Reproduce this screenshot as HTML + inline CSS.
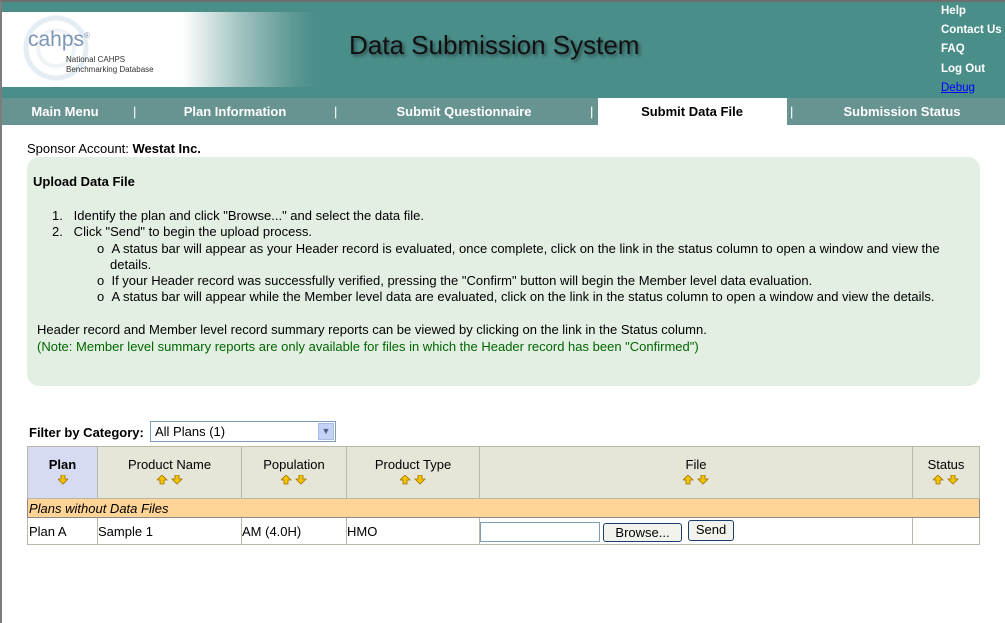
<!DOCTYPE html>
<html><head><meta charset="utf-8"><style>
*{margin:0;padding:0;box-sizing:border-box}
body{width:1005px;height:623px;overflow:hidden;background:#fff;font-family:"Liberation Sans",Arial,sans-serif;font-size:12px;color:#000;position:relative}
.a{position:absolute;white-space:nowrap}
#frame{position:absolute;left:0;top:0;width:1005px;height:623px;border-left:2px solid #7d7d7d;border-top:2px solid #6e6e6e}
#hdr{left:2px;top:2px;width:1003px;height:96px;background:#4a8e8a}
#logo{left:2px;top:12px;width:312px;height:75px;background:linear-gradient(to right,#fff 0,#fff 180px,#9fc2bf 240px,#5f9995 290px,#4a8e8a 312px)}
#nav{left:2px;top:98px;width:1003px;height:27px;background:#679390}
.nv{position:absolute;top:104px;color:#fff;font-weight:bold;font-size:13px;transform:translateX(-50%);white-space:nowrap}
.sep{position:absolute;top:104px;color:#fff;font-size:13px}
.lk{position:absolute;left:941px;color:#fff;font-weight:bold;font-size:11.5px;white-space:nowrap}
.t{font-size:13px}
table{border-collapse:collapse;position:absolute;left:27px;top:446px;width:953px}
td,th{border:1px solid #b8b8a8;font-size:13px;white-space:nowrap}
th{background:#e6e6d8;font-weight:normal;height:52px;vertical-align:top;padding-top:10px;text-align:center}
.ar{display:inline-block;margin-top:3px}
</style></head><body>
<div id="frame"></div>
<div class="a" id="hdr"></div>
<div class="a" id="logo"></div>
<svg class="a" style="left:22px;top:14px" width="70" height="72"><circle cx="34" cy="34" r="30" fill="none" stroke="#e4edf1" stroke-width="5"/><circle cx="34" cy="34" r="18" fill="none" stroke="#eef4f6" stroke-width="4"/></svg>
<div class="a" style="left:28px;top:28px;font-size:21px;color:#7d95b5">cahps<sup style="font-size:8px">®</sup></div>
<div class="a" style="left:66px;top:55px;font-size:8px;color:#333;line-height:10px">National CAHPS<br>Benchmarking Database</div>
<div class="a" style="left:349px;top:30px;font-size:26px;color:#111;text-shadow:2px 2px 3px #2a4a48">Data Submission System</div>
<div class="lk" style="top:5px">Help</div>
<div class="lk" style="top:24px">Contact Us</div>
<div class="lk" style="top:43px">FAQ</div>
<div class="lk" style="top:63px">Log Out</div>
<div class="lk" style="top:82px;color:#00f;font-weight:normal;text-decoration:underline">Debug</div>
<div class="a" id="nav"></div>
<div class="a" style="left:598px;top:98px;width:189px;height:27px;background:#fff"></div>
<div class="nv" style="left:65px">Main Menu</div>
<div class="nv" style="left:235px">Plan Information</div>
<div class="nv" style="left:464px">Submit Questionnaire</div>
<div class="nv" style="left:692px;color:#000">Submit Data File</div>
<div class="nv" style="left:902px">Submission Status</div>
<div class="sep" style="left:133px">|</div><div class="sep" style="left:334px">|</div><div class="sep" style="left:590px">|</div><div class="sep" style="left:790px">|</div>
<div class="a t" style="left:27px;top:141px">Sponsor Account: <b>Westat Inc.</b></div>
<div class="a" style="left:27px;top:157px;width:953px;height:229px;background:#e4efe4;border-radius:12px"></div>
<div class="a t" style="left:33px;top:174px;font-weight:bold">Upload Data File</div>
<div class="a t" style="left:52px;top:208px;line-height:16.3px">
<div>1.&nbsp;&nbsp;&nbsp;Identify the plan and click "Browse..." and select the data file.</div>
<div>2.&nbsp;&nbsp;&nbsp;Click "Send" to begin the upload process.</div>
<div style="padding-left:45px">o&nbsp;&nbsp;A status bar will appear as your Header record is evaluated, once complete, click on the link in the status column to open a window and view the</div>
<div style="padding-left:58px">details.</div>
<div style="padding-left:45px">o&nbsp;&nbsp;If your Header record was successfully verified, pressing the "Confirm" button will begin the Member level data evaluation.</div>
<div style="padding-left:45px">o&nbsp;&nbsp;A status bar will appear while the Member level data are evaluated, click on the link in the status column to open a window and view the details.</div>
</div>
<div class="a t" style="left:37px;top:322px">Header record and Member level record summary reports can be viewed by clicking on the link in the Status column.</div>
<div class="a t" style="left:37px;top:339px;color:#006600">(Note: Member level summary reports are only available for files in which the Header record has been "Confirmed")</div>
<div class="a" style="left:29px;top:425px;font-weight:bold;font-size:13px">Filter by Category:</div>
<div class="a" style="left:150px;top:421px;width:186px;height:21px;border:1px solid #7f9db9;background:#fff;padding:2px 4px;font-size:13px">All Plans (1)</div>
<div class="a" style="left:318px;top:423px;width:16px;height:17px;background:#c3d3f5;border:1px solid #aabbe0;font-size:9px;text-align:center;line-height:15px;color:#4d6185">&#9660;</div>
<svg width="0" height="0" style="position:absolute"><defs>
<g id="dn"><path d="M3 0h4v4h3l-5 5-5-5h3z" fill="#f5c400" stroke="#a07000" stroke-width="0.8"/></g>
<g id="up"><path d="M3 9h4v-4h3l-5-5-5 5h3z" fill="#f5c400" stroke="#a07000" stroke-width="0.8"/></g></defs></svg>
<table>
<tr><th style="width:70px;background:#d6dbf2;font-weight:bold">Plan<br><svg class="ar" width="10" height="10"><use href="#dn"/></svg></th>
<th style="width:144px">Product Name<br><svg class="ar" width="26" height="10"><use href="#up"/><use href="#dn" x="15"/></svg></th>
<th style="width:105px">Population<br><svg class="ar" width="26" height="10"><use href="#up"/><use href="#dn" x="15"/></svg></th>
<th style="width:133px">Product Type<br><svg class="ar" width="26" height="10"><use href="#up"/><use href="#dn" x="15"/></svg></th>
<th style="width:433px">File<br><svg class="ar" width="26" height="10"><use href="#up"/><use href="#dn" x="15"/></svg></th>
<th>Status<br><svg class="ar" width="26" height="10"><use href="#up"/><use href="#dn" x="15"/></svg></th></tr>
<tr><td colspan="6" style="background:#ffd597;font-style:italic;height:19px;border-color:#8a8a8a;padding-left:1px">Plans without Data Files</td></tr>
<tr style="height:27px"><td style="padding-left:1px">Plan A</td><td>Sample 1</td><td>AM (4.0H)</td><td>HMO</td>
<td style="position:relative"><span style="position:absolute;left:0;top:4px;width:120px;height:20px;border:1px solid #7f9db9"></span>
<span style="position:absolute;left:123px;top:5px;width:79px;height:19px;border:1px solid #1c3d6e;border-radius:3px;background:#f3f3ee;text-align:center;line-height:17px">Browse...</span>
<span style="position:absolute;left:208px;top:2px;width:46px;height:21px;border:1px solid #1c3d6e;border-radius:3px;background:#f3f3ee;text-align:center;line-height:18px">Send</span></td>
<td></td></tr>
</table>
</body></html>
